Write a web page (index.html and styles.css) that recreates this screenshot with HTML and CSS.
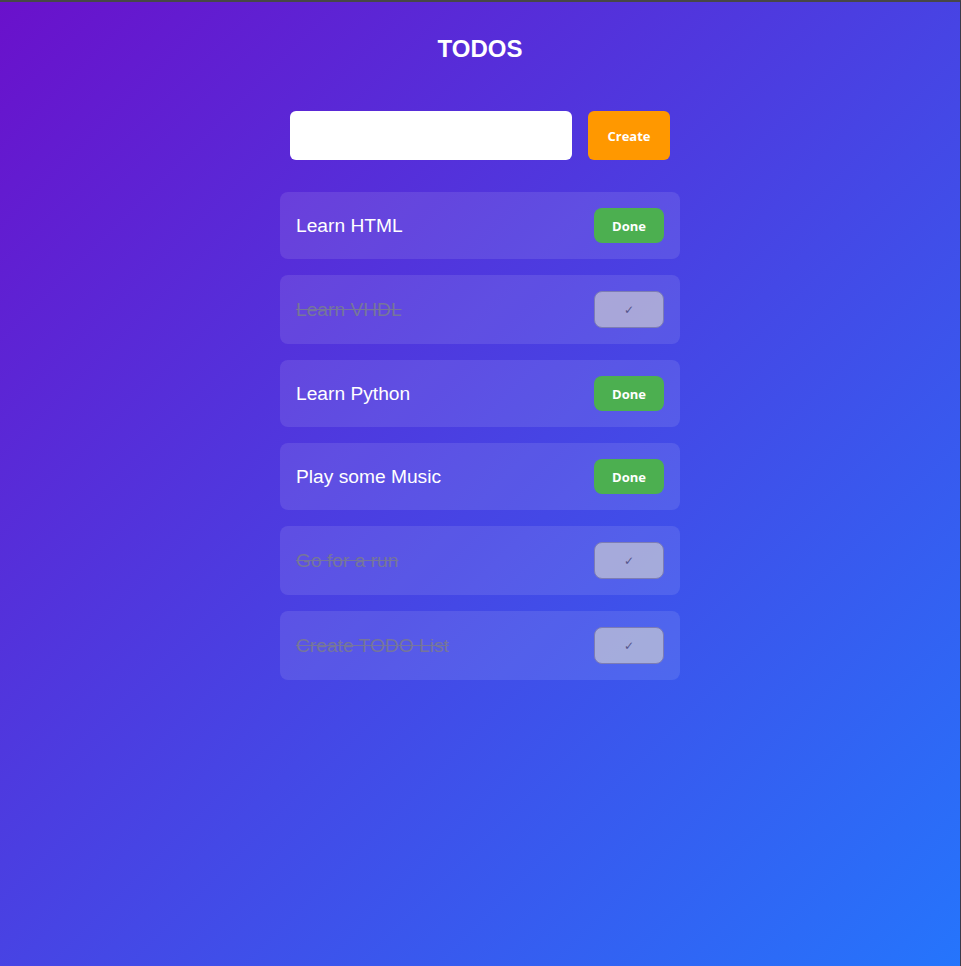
FILE: index.html
```html
<!DOCTYPE html>
<html lang="en">
<head>
<meta charset="utf-8">
<title>TODOS</title>
<link rel="stylesheet" href="styles.css">
</head>
<body>
<div class="app">
  <h1 class="title">TODOS</h1>
  <form class="new-todo" onsubmit="return false;">
    <input class="new-todo__input" type="text">
    <button class="new-todo__btn" type="submit">Create</button>
  </form>
  <ul class="todo-list">
    <li class="todo"><span class="todo__text">Learn HTML</span><button class="todo__btn">Done</button></li>
    <li class="todo todo--done"><span class="todo__text">Learn VHDL</span><button class="todo__btn todo__btn--disabled" disabled>✓</button></li>
    <li class="todo"><span class="todo__text">Learn Python</span><button class="todo__btn">Done</button></li>
    <li class="todo"><span class="todo__text">Play some Music</span><button class="todo__btn">Done</button></li>
    <li class="todo todo--done"><span class="todo__text">Go for a run</span><button class="todo__btn todo__btn--disabled" disabled>✓</button></li>
    <li class="todo todo--done"><span class="todo__text">Create TODO List</span><button class="todo__btn todo__btn--disabled" disabled>✓</button></li>
  </ul>
</div>
</body>
</html>
```
FILE: styles.css
```css
html, body {
  margin: 0;
  padding: 0;
}
body {
  min-height: 966px;
  box-sizing: border-box;
  background: linear-gradient(135deg, #6a11cb 0%, #2575fc 100%);
  border-top: 2px solid #474747;
  border-right: 1px solid #3a3a4a;
  font-family: "Liberation Sans", Arial, sans-serif;
  color: #fff;
}
.app {
  display: flex;
  flex-direction: column;
  align-items: center;
  padding-top: 33px;
}
.title {
  margin: 0;
  font-size: 24px;
  font-weight: bold;
  line-height: 28px;
}
.new-todo {
  display: flex;
  gap: 16px;
  margin-top: 48px;
}
.new-todo__input {
  width: 282px;
  height: 49px;
  box-sizing: border-box;
  border: none;
  border-radius: 6px;
  background: #fff;
  padding: 0 12px;
  font-size: 16px;
  outline: none;
}
.new-todo__btn {
  width: 82px;
  height: 49px;
  border: none;
  border-radius: 6px;
  background: #ff9800;
  color: #fff;
  font-family: "Open Sans", sans-serif;
  font-weight: bold;
  font-size: 13px;
}
.todo-list {
  list-style: none;
  margin: 32px 0 0;
  padding: 0;
  width: 400px;
  display: flex;
  flex-direction: column;
  gap: 16px;
}
.todo {
  display: flex;
  align-items: center;
  justify-content: space-between;
  padding: 16px;
  border-radius: 8px;
  background: rgba(255, 255, 255, 0.1);
}
.todo__text {
  font-size: 19.2px;
  color: #fff;
}
.todo--done .todo__text {
  text-decoration: line-through;
  color: #76769a;
}
.todo__btn {
  width: 70px;
  height: 35px;
  box-sizing: border-box;
  border: none;
  border-radius: 8px;
  background: #4caf50;
  color: #fff;
  font-family: "Open Sans", sans-serif;
  font-weight: bold;
  font-size: 13px;
  padding: 0;
}
.todo__btn--disabled {
  height: 37px;
  border: 1px solid #7c7cb4;
  background: rgba(211, 211, 211, 0.65);
  color: #55558a;
  font-family: "DejaVu Sans", sans-serif;
  font-weight: normal;
  font-size: 12px;
}
```
